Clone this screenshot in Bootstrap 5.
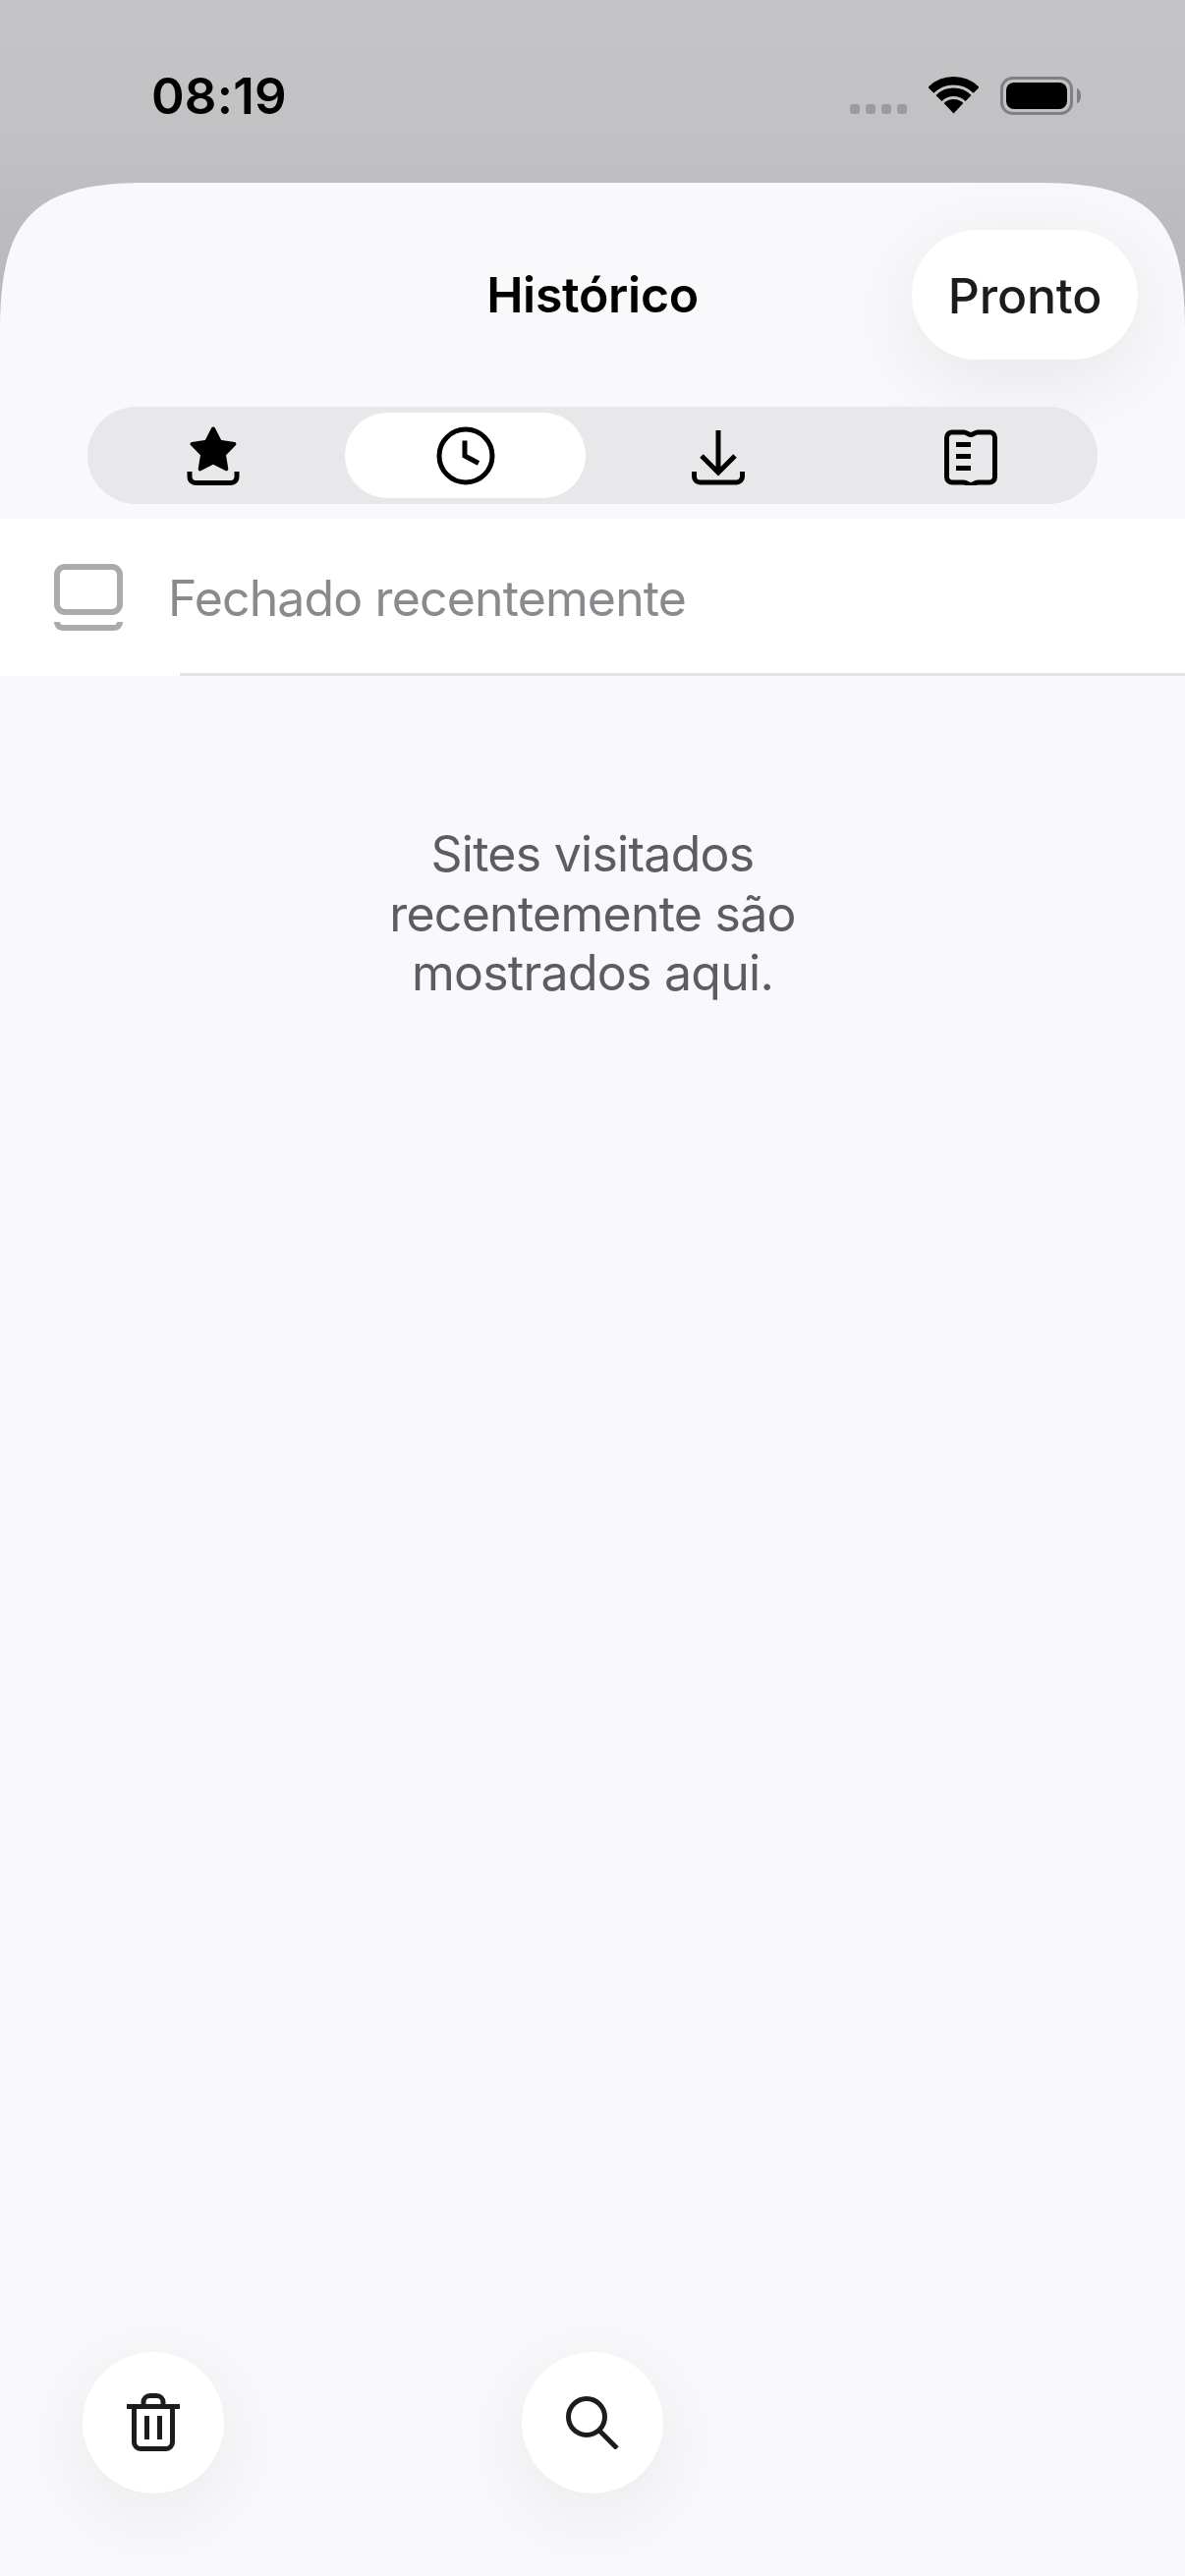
<!DOCTYPE html>
<html lang="pt">
<head>
<meta charset="utf-8">
<title>Histórico</title>
<link href="https://cdn.jsdelivr.net/npm/bootstrap@5.3.0/dist/css/bootstrap.min.css" rel="stylesheet">
<style>
html,body{margin:0;height:2622px;overflow:hidden}
.phone{height:2622px;font-family:Inter,"Liberation Sans",sans-serif;background:linear-gradient(180deg,#c4c4c6 0,#c2c2c4 130px,#bbbbbd 240px,#b9b9bb 340px);color:#000}
.status-zone{height:186px;padding:0 106px 0 154px;flex:none}
.clock-text{font-size:51px;font-weight:600;line-height:1;margin-top:72px;letter-spacing:.2px}
.status-icons{margin-top:78px;gap:22px}
.dots{gap:6px;margin-top:28px}
.dots span{display:block;width:10px;height:10px;border-radius:3px;background:#9c9c9e}
.sheet-panel{background:#f9f9fb;min-height:0;clip-path:path("M0 150C0 35 35 0 150 0H1056C1171 0 1206 35 1206 150V2436H0Z")}
.top-bar{padding:48px 48px 0;display:grid;grid-template-columns:1fr auto 1fr;align-items:center}
.sheet-title{font-size:50px;font-weight:600;line-height:60px;letter-spacing:-.3px}
.done-btn{justify-self:end;width:230px;height:132px;border:0;border-radius:66px;background:#fff;color:#1c1c1e;font-size:50px;font-weight:450;line-height:60px;padding:2px 0 0;letter-spacing:-.2px;box-shadow:0 20px 90px rgba(0,0,0,.08)}
.done-btn:hover,.done-btn:active{background:#fff!important;color:#1c1c1e!important}
.seg{margin:48px 89px 0;height:99px;background:#e8e8ea;border-radius:50px;padding:6px 7px 6px 5px;gap:12px}
.seg-item{width:245px;height:87px;border-radius:44px}
.seg-item.on{background:#fff}
.recent-row{height:160px;margin-top:15px;background:#fff;position:relative;padding-left:55px;gap:46px}
.recent-row::after{content:"";position:absolute;left:183px;right:0;bottom:0;height:3px;background:#e3e3e5}
.recent-text{font-size:50px;line-height:60px;color:#8a8a8e;letter-spacing:-.87px;padding-top:2px}
.empty-note{margin-top:151px;font-size:50px;line-height:60.5px;color:#5c5c62;letter-spacing:-.74px}
.tools{margin-top:auto;padding:0 84px 84px;display:grid;grid-template-columns:1fr auto 1fr}
.round-tool{width:144px;height:144px;border:0;border-radius:50%;background:#fff;padding:0;box-shadow:0 20px 90px rgba(0,0,0,.07)}
.round-tool:hover,.round-tool:active{background:#fff!important}
svg{display:block}
</style>
</head>
<body>
<div class="phone d-flex flex-column">
  <div class="status-zone d-flex justify-content-between align-items-start">
    <div class="clock-text">08:19</div>
    <div class="status-icons d-flex align-items-start">
      <div class="dots d-flex"><span></span><span></span><span></span><span></span></div>
      <svg width="51" height="38" viewBox="0 0 51 38" fill="none" stroke="#000" stroke-width="8.5"><path d="M2.35 13.85A32.75 32.75 0 0 1 48.65 13.85"/><path d="M10.5 22A21.25 21.25 0 0 1 40.5 22"/><path d="M25.5 37.5 15.6 27.1A14 14 0 0 1 35.4 27.1Z" fill="#000" stroke="none"/></svg>
      <svg width="82" height="40" viewBox="0 0 82 40"><rect x="1.5" y="1.5" width="71" height="36" rx="11" fill="none" stroke="#808082" stroke-width="3"/><rect x="6" y="6" width="62" height="27" rx="8" fill="#000"/><path d="M78 12c2.500.5 4 3.500 4 7.500s-1.500 7-4 7.500Z" fill="#808082"/></svg>
    </div>
  </div>

  <div class="sheet-panel flex-grow-1 d-flex flex-column">
    <div class="top-bar">
      <span></span>
      <div class="sheet-title text-center">Histórico</div>
      <button type="button" class="btn done-btn">Pronto</button>
    </div>

    <div class="seg d-flex">
      <div class="seg-item d-flex align-items-center justify-content-center">
        <svg width="60" height="60" viewBox="0 0 60 60" fill="none" stroke="#000" stroke-width="5"><polygon points="30,2.500 36.800,15.700 51.400,17.900 40.900,28.600 43.300,43.300 30,36.500 16.700,43.300 19.100,28.600 8.600,17.900 23.200,15.700" fill="#000" stroke-width="4" stroke-linejoin="round"/><path d="M6 46v5.500a6 6 0 0 0 6 6h36a6 6 0 0 0 6-6V46"/></svg>
      </div>
      <div class="seg-item on d-flex align-items-center justify-content-center">
        <svg width="60" height="60" viewBox="0 0 60 60" fill="none" stroke="#000" stroke-width="5"><circle cx="30" cy="30" r="27"/><path d="M29 14.500V30l14 7.500"/></svg>
      </div>
      <div class="seg-item d-flex align-items-center justify-content-center">
        <svg width="60" height="60" viewBox="0 0 60 60" fill="none" stroke="#000" stroke-width="5"><path d="M30 4v43M13 30l17 17 17-17"/><path d="M5.500 46v5a6 6 0 0 0 6 6h37a6 6 0 0 0 6-6v-5"/></svg>
      </div>
      <div class="seg-item d-flex align-items-center justify-content-center">
        <svg width="60" height="60" viewBox="0 0 60 60" fill="none" stroke="#000" stroke-width="5"><path d="M11 6H23c3 0 4.500 2.500 7 2.500S34 6 37 6H49a5.500 5.500 0 0 1 5.500 5.500V51.500A5.500 5.500 0 0 1 49 57H37c-3 0-4.500 2.500-7 2.500S26 57 23 57H11a5.500 5.500 0 0 1-5.500-5.500V11.500A5.500 5.500 0 0 1 11 6Z"/><path d="M15 18.500H30M15 30.500H30M15 42.500H30"/></svg>
      </div>
    </div>

    <div class="recent-row d-flex align-items-center">
      <svg width="70" height="68" viewBox="0 0 70 68"><rect x="3" y="3" width="64" height="46" rx="8" fill="none" stroke="#ababaf" stroke-width="6"/><path d="M0 59H6c0 2 1 3 3 3H61c2 0 3-1 3-3H70c0 5-4 9-9 9H9C4 68 0 64 0 59Z" fill="#ababaf"/></svg>
      <span class="recent-text">Fechado recentemente</span>
    </div>

    <p class="empty-note text-center mb-0">Sites visitados<br>recentemente são<br>mostrados aqui.</p>

    <div class="tools">
      <button type="button" class="btn round-tool d-flex align-items-center justify-content-center" aria-label="Apagar">
        <svg width="54" height="60" viewBox="0 0 54 60" fill="none" stroke="#1c1c1e" stroke-width="5"><path d="M0 13.500H54"/><path d="M17 13V9a6.500 6.500 0 0 1 6.500-6.500h7A6.500 6.500 0 0 1 37 9v4"/><path d="M7.500 13V50a6.500 6.500 0 0 0 6.500 6.500H40a6.500 6.500 0 0 0 6.500-6.500V13"/><path d="M20.500 23V47M33.500 23V47"/></svg>
      </button>
      <button type="button" class="btn round-tool d-flex align-items-center justify-content-center" aria-label="Buscar">
        <svg width="54" height="54" viewBox="0 0 54 54" fill="none" stroke="#1c1c1e" stroke-width="5"><circle cx="21" cy="21" r="18.500"/><path d="M33 34 52 53"/></svg>
      </button>
      <span></span>
    </div>
  </div>
</div>
<script src="https://cdn.jsdelivr.net/npm/bootstrap@5.3.0/dist/js/bootstrap.bundle.min.js"></script>
</body>
</html>
